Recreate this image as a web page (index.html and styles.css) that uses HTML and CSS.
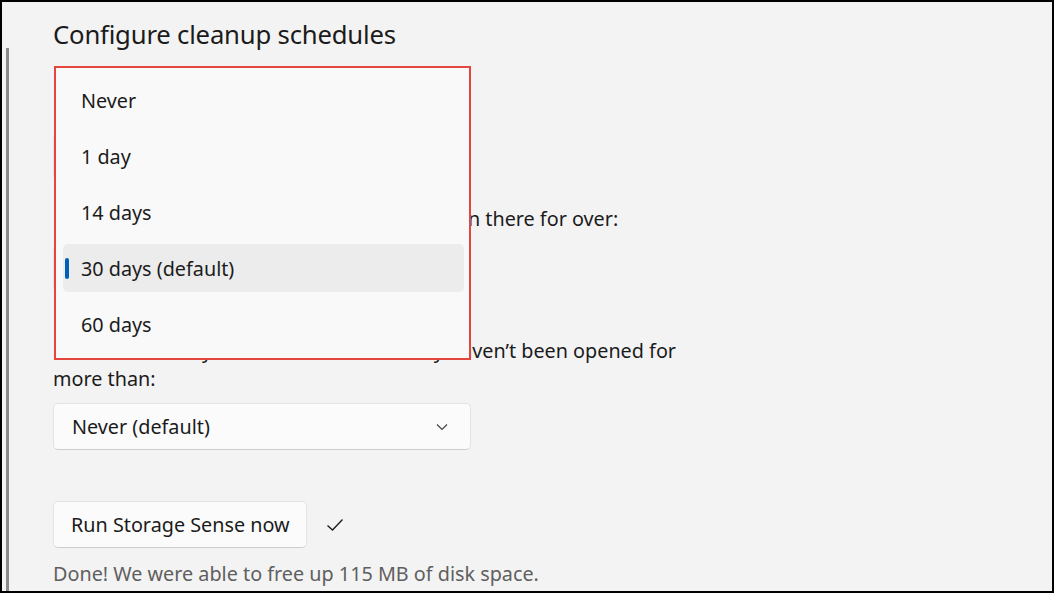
FILE: index.html
```html
<!DOCTYPE html>
<html lang="en">
<head>
<meta charset="utf-8">
<title>Configure cleanup schedules</title>
<link rel="stylesheet" href="styles.css">
</head>
<body>
<div class="frame">
  <div class="rail"><div class="rail-line"></div></div>
  <main class="content">
    <h1 class="title">Configure cleanup schedules</h1>

    <section class="group first">
      <p class="label">Run Storage Sense</p>
      <div class="select"><span>During low free disk space (default)</span><svg class="chev" viewBox="0 0 12 8" width="12" height="8"><path d="M1 1.5 L6 6.5 L11 1.5" fill="none" stroke="#444" stroke-width="1.2"/></svg></div>
    </section>

    <section class="group recycle">
      <p class="label">Delete files in my recycle bin if they have been there for over:</p>
      <div class="select"><span>30 days (default)</span><svg class="chev" viewBox="0 0 12 8" width="12" height="8"><path d="M1 1.5 L6 6.5 L11 1.5" fill="none" stroke="#444" stroke-width="1.2"/></svg></div>
    </section>

    <section class="group downloads">
      <p class="label">Delete files in my Downloads folder if they haven’t been opened for<br>more than:</p>
      <div class="select"><span>Never (default)</span><svg class="chev" viewBox="0 0 12 8" width="12" height="8"><path d="M1 1.5 L6 6.5 L11 1.5" fill="none" stroke="#444" stroke-width="1.2"/></svg></div>
    </section>

    <div class="run-row">
      <button class="btn">Run Storage Sense now</button>
      <svg class="check" viewBox="0 0 18 14" width="18" height="14"><path d="M1.5 7.5 L6.5 12 L16.5 1.5" fill="none" stroke="#1b1b1b" stroke-width="1.3"/></svg>
    </div>
    <p class="done">Done! We were able to free up 115 MB of disk space.</p>

    <div class="popup">
      <ul class="menu">
        <li class="item">Never</li>
        <li class="item">1 day</li>
        <li class="item">14 days</li>
        <li class="item selected">30 days (default)</li>
        <li class="item">60 days</li>
      </ul>
    </div>
  </main>
</div>
</body>
</html>
```

FILE: styles.css
```css
* { box-sizing: border-box; }
html, body { margin: 0; padding: 0; }
body {
  width: 1054px;
  height: 593px;
  overflow: hidden;
  font-family: "Noto Sans", "Open Sans", "Liberation Sans", sans-serif;
  color: #1b1b1b;
  background: #000;
}
.frame {
  width: 1054px;
  height: 593px;
  border: 2px solid #000;
  background: #f3f3f3;
  display: flex;
  overflow: hidden;
}
.rail {
  width: 51px;
  flex: none;
  padding-left: 4px;
  padding-top: 46px;
}
.rail-line {
  width: 3px;
  height: 100%;
  background: #8a8a8a;
}
.content {
  position: relative;
  flex: 1;
  padding-top: 15px;
}
.title {
  margin: 0;
  font-size: 25.7px;
  font-weight: 400;
  line-height: 36px;
  letter-spacing: -0.2px;
}
p { margin: 0; }
.label {
  font-size: 19.8px;
  line-height: 28px;
}
.first { margin-top: 41px; }
.recycle { margin-top: 25px; }
.downloads { margin-top: 45px; }
.select {
  margin-top: 11px;
  width: 418px;
  height: 47px;
  border: 1px solid #e3e3e3;
  border-bottom-color: #cdcdcd;
  border-radius: 5px;
  background: #fbfbfb;
  display: flex;
  align-items: center;
  justify-content: space-between;
  padding: 0 22px 0 18px;
  font-size: 19.8px;
}
.recycle .select { margin-top: 12px; }
.downloads .select { margin-top: 10px; }
.chev { display: block; }
.run-row {
  margin-top: 51px;
  display: flex;
  align-items: center;
  gap: 19px;
}
.btn {
  font: inherit;
  font-size: 19.8px;
  color: #1b1b1b;
  width: 254px;
  height: 47px;
  border: 1px solid #e3e3e3;
  border-bottom-color: #cdcdcd;
  border-radius: 5px;
  background: #fbfbfb;
  padding: 0 0 0 17px;
  text-align: left;
  white-space: nowrap;
}
.check { display: block; }
.done {
  margin-top: 12px;
  font-size: 19.8px;
  line-height: 28px;
  color: #5f5f5f;
}
.popup {
  position: absolute;
  left: 1px;
  top: 64px;
  width: 417px;
  height: 294px;
  border: 2px solid #e4463e;
  background: #f9f9f9;
  padding: 8px 5px 0 7px;
}
.menu {
  list-style: none;
  margin: 0;
  padding: 0;
  display: flex;
  flex-direction: column;
  gap: 8px;
}
.item {
  position: relative;
  height: 48px;
  display: flex;
  align-items: center;
  padding-left: 18px;
  font-size: 19.8px;
  border-radius: 5px;
}
.item.selected { background: #ececec; }
.item.selected::before {
  content: "";
  position: absolute;
  left: 2px;
  top: 14px;
  width: 4px;
  height: 21px;
  border-radius: 2px;
  background: #005fb8;
}
```
